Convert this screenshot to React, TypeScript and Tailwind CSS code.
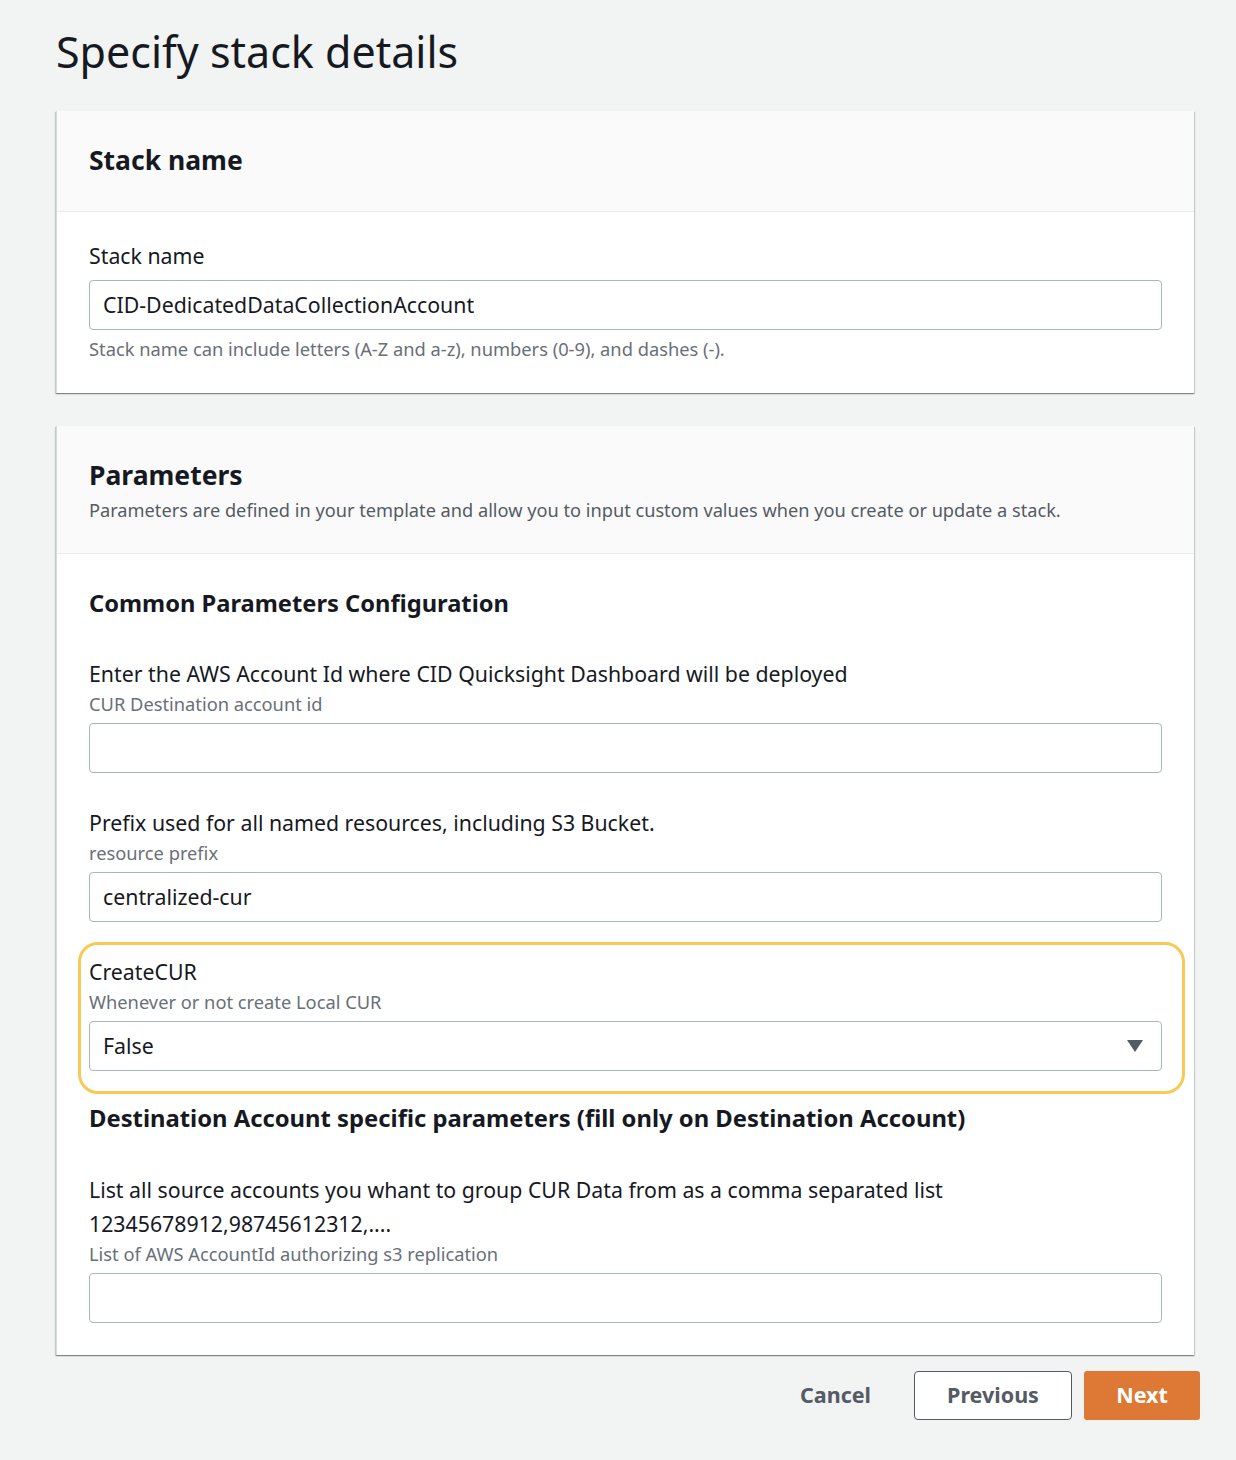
import React from "react";

const font = { fontFamily: '"Noto Sans", "Open Sans", Arial, sans-serif' };

function Field({ label, label2, sub, value, select }: { label: string; label2?: string; sub: string; value?: string; select?: boolean }) {
  return (
    <div>
      <div className="text-[21.3px] leading-[34px] text-[#16191f]">{label}</div>
      {label2 && <div className="text-[21.3px] leading-[34px] text-[#16191f]">{label2}</div>}
      <div className="text-[18.3px] leading-[26px] text-[#687078]">{sub}</div>
      <div className="mt-[6px] flex h-[50px] items-center justify-between rounded-[4px] border border-[#aab7b8] bg-white px-[13px] text-[21.3px] text-[#16191f]">
        <span>{value}</span>
        {select && (
          <svg width="18" height="14" viewBox="0 0 18 14" className="mr-[4px]">
            <path d="M1 1 L17 1 L9 13 Z" fill="#545b64" />
          </svg>
        )}
      </div>
    </div>
  );
}

const shadow =
  "shadow-[0_1px_1px_0_rgba(0,28,36,0.3),1px_1px_1px_0_rgba(0,28,36,0.15),-1px_1px_1px_0_rgba(0,28,36,0.15)]";

export default function App() {
  return (
    <div className="min-h-[1460px] w-[1236px] bg-[#f2f3f3] text-[#16191f]" style={font}>
      <div className="pl-[56px] pr-[42px] pt-[24px]">
        <h1 className="text-[43px] leading-[56px] text-[#16191f]">Specify stack details</h1>

        <div className={`mt-[31px] border-l border-[#d5dbdb] bg-white ${shadow}`}>
          <div className="flex h-[101px] items-center border-b border-[#eaeded] bg-[#fafafa] px-[32px]">
            <h2 className="text-[26.5px] font-bold text-[#16191f]">Stack name</h2>
          </div>
          <div className="px-[32px] pt-[27px] pb-[31px]">
            <div className="text-[21.3px] leading-[34px]">Stack name</div>
            <div className="mt-[7px] flex h-[50px] items-center rounded-[4px] border border-[#aab7b8] px-[13px] text-[21.3px]">
              CID-DedicatedDataCollectionAccount
            </div>
            <div className="mt-[6px] text-[18.3px] leading-[26px] text-[#687078]">
              Stack name can include letters (A-Z and a-z), numbers (0-9), and dashes (-).
            </div>
          </div>
        </div>

        <div className={`mt-[33px] border-l border-[#d5dbdb] bg-white ${shadow}`}>
          <div className="border-b border-[#eaeded] bg-[#fafafa] px-[32px] pt-[31px] pb-[30px]">
            <h2 className="text-[26.5px] font-bold leading-[36px] text-[#16191f]">Parameters</h2>
            <div className="mt-[4px] text-[18.2px] leading-[26px] text-[#545b64]">
              Parameters are defined in your template and allow you to input custom values when you create or update a stack.
            </div>
          </div>
          <div className="px-[32px] pt-[31px] pb-[32px]">
            <h3 className="text-[23.7px] font-bold leading-[36px]">Common Parameters Configuration</h3>
            <div className="mt-[36px]">
              <Field label="Enter the AWS Account Id where CID Quicksight Dashboard will be deployed" sub="CUR Destination account id" />
            </div>
            <div className="mt-[33px]">
              <Field label="Prefix used for all named resources, including S3 Bucket." sub="resource prefix" value="centralized-cur" />
            </div>
            <div className="mt-[20px] ml-[-11px] mr-[-23px] rounded-[20px] border-[3px] border-[#f5ca55] pl-[8px] pr-[20px] pt-[10px] pb-[20px]">
              <Field label="CreateCUR" sub="Whenever or not create Local CUR" value="False" select />
            </div>
            <h3 className="mt-[6px] text-[23.8px] font-bold leading-[36px]">
              Destination Account specific parameters (fill only on Destination Account)
            </h3>
            <div className="mt-[37px]">
              <Field
                label="List all source accounts you whant to group CUR Data from as a comma separated list"
                label2="12345678912,98745612312,...."
                sub="List of AWS AccountId authorizing s3 replication"
              />
            </div>
          </div>
        </div>

        <div className="mt-[16px] flex items-center justify-end gap-[12px] mr-[-6px]">
          <button className="px-[31px] text-[21.5px] font-bold text-[#545b64]">Cancel</button>
          <button className="h-[49px] w-[158px] rounded-[4px] border border-[#545b64] bg-white text-[21.5px] font-bold text-[#545b64]">
            Previous
          </button>
          <button className="h-[49px] w-[116px] rounded-[3px] bg-[#dd7934] text-[21.5px] font-bold text-white">Next</button>
        </div>
      </div>
    </div>
  );
}
